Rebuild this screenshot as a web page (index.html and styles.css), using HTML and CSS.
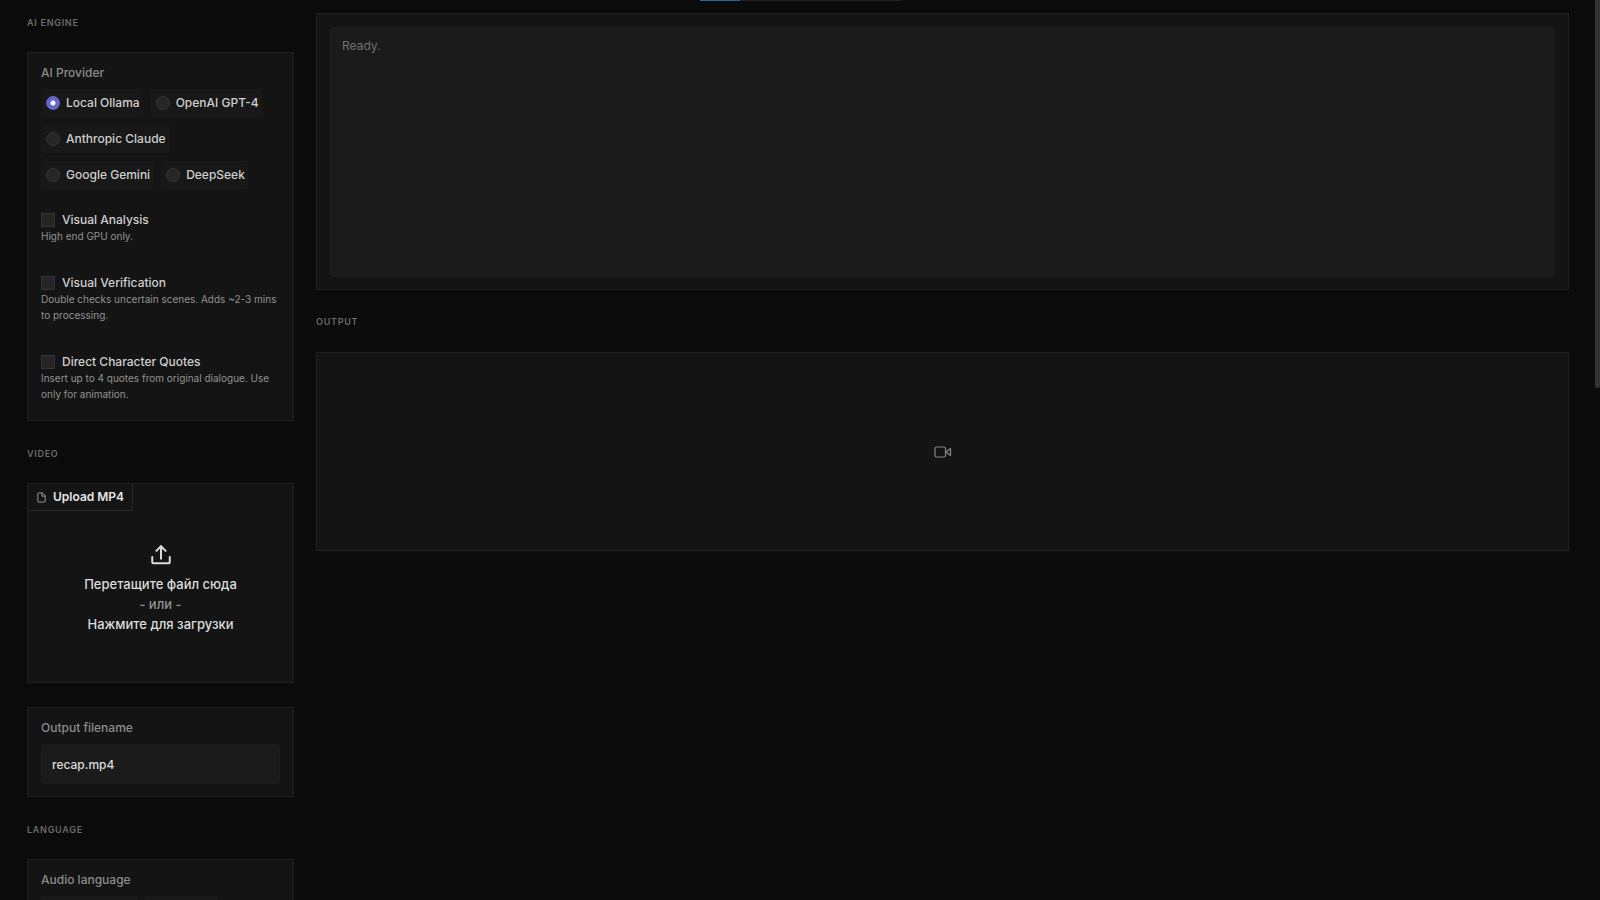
FILE: index.html
```html
<!DOCTYPE html>
<html lang="ru">
<head>
<meta charset="utf-8">
<meta name="viewport" content="width=device-width, initial-scale=1">
<title>Recap</title>
<link rel="stylesheet" href="styles.css">
</head>
<body>
<div class="progress"><div class="progress-fill"></div></div>
<div class="scroll-thumb"></div>
<main class="layout">
  <aside class="sidebar">
    <h2 class="section-title">AI Engine</h2>
    <section class="card engine">
      <fieldset class="field">
        <legend class="label">AI Provider</legend>
        <div class="options">
          <label class="option"><input class="radio" type="radio" name="provider" checked>Local Ollama</label>
          <label class="option"><input class="radio" type="radio" name="provider">OpenAI GPT-4</label>
          <label class="option"><input class="radio" type="radio" name="provider">Anthropic Claude</label>
          <label class="option"><input class="radio" type="radio" name="provider">Google Gemini</label>
          <label class="option"><input class="radio" type="radio" name="provider">DeepSeek</label>
        </div>
      </fieldset>
      <div class="toggles">
        <div class="toggle">
          <label class="check-label"><input class="check" type="checkbox">Visual Analysis</label>
          <p class="hint">High end GPU only.</p>
        </div>
        <div class="toggle">
          <label class="check-label"><input class="check" type="checkbox">Visual Verification</label>
          <p class="hint">Double checks uncertain scenes. Adds ~2-3 mins to processing.</p>
        </div>
        <div class="toggle">
          <label class="check-label"><input class="check" type="checkbox">Direct Character Quotes</label>
          <p class="hint">Insert up to 4 quotes from original dialogue. Use only for animation.</p>
        </div>
      </div>
    </section>

    <h2 class="section-title">Video</h2>
    <section class="card upload">
      <div class="upload-tab">
        <svg class="file-icon" viewBox="0 0 24 24" fill="none" stroke="currentColor" stroke-width="2" stroke-linecap="round" stroke-linejoin="round"><path d="M13 2H6a2 2 0 0 0-2 2v16a2 2 0 0 0 2 2h12a2 2 0 0 0 2-2V9z"/><path d="M13 2v7h7"/></svg>
        <span>Upload MP4</span>
      </div>
      <button class="drop" type="button">
        <svg class="upload-icon" viewBox="0 0 24 24" fill="none" stroke="currentColor" stroke-width="2.4" stroke-linecap="round" stroke-linejoin="round"><path d="M1.500 14.500v5.500a2 2 0 0 0 2 2h17a2 2 0 0 0 2-2v-5.500"/><path d="M6.500 7 12 1.500 17.500 7"/><path d="M12 1.500v15"/></svg>
        <span>Перетащите файл сюда</span>
        <span class="or">- или -</span>
        <span>Нажмите для загрузки</span>
      </button>
    </section>
    <section class="card filename">
      <label class="label" for="filename">Output filename</label>
      <input class="text-input" id="filename" type="text" value="recap.mp4">
    </section>

    <h2 class="section-title">Language</h2>
    <section class="card engine">
      <fieldset class="field">
        <legend class="label">Audio language</legend>
        <div class="options">
          <label class="option option-wide"><input class="radio" type="radio" name="audio" checked></label>
          <label class="option option-short"><input class="radio" type="radio" name="audio"></label>
        </div>
      </fieldset>
    </section>
  </aside>

  <div class="content">
    <section class="card status">
      <textarea class="log" aria-label="Status" readonly>Ready.</textarea>
    </section>
    <h2 class="section-title">Output</h2>
    <section class="card player" aria-label="Output video">
      <svg class="video-icon" viewBox="0 0 18 12" fill="none" stroke="currentColor" stroke-width="1.2" stroke-linejoin="round"><rect x="1" y="1" width="10.500" height="10" rx="1.500"/><path d="M12 6l4.500-3.500v7z"/></svg>
    </section>
  </div>
</main>
</body>
</html>
```
FILE: styles.css
```css
* {
  box-sizing: border-box;
}

body {
  margin: 0;
  height: 100vh;
  overflow: hidden;
  background: #0b0b0b;
  color: #cfcfcf;
  font: 500 12px/16px Inter, "Noto Sans", sans-serif;
}

.progress {
  position: absolute;
  top: 0;
  left: 50%;
  width: 202px;
  height: 1px;
  margin-left: -100px;
  background: #202020;
}

.progress-fill {
  width: 40px;
  height: 100%;
  background: #2d5f91;
}

.scroll-thumb {
  position: absolute;
  top: 0;
  right: 0;
  width: 5px;
  height: 388px;
  border-radius: 0 0 3px 3px;
  background: #333;
}

.layout {
  display: grid;
  grid-template-columns: 267px minmax(0, 1fr);
  gap: 22px;
  padding: 13px 31px 0 27px;
}

.section-title {
  margin: 0;
  color: #6a6a6a;
  font-size: 9px;
  font-weight: 600;
  line-height: 20px;
  letter-spacing: 0.08em;
  text-transform: uppercase;
}

.card {
  border: 1px solid #202020;
  background: #141414;
}

.sidebar .card {
  margin-top: 19px;
}

.sidebar .card + .section-title {
  margin-top: 23px;
}

.engine {
  padding: 12px 13px 18px;
}

.field {
  min-width: 0;
  margin: 0;
  padding: 0;
  border: 0;
}

.label {
  display: block;
  padding: 0;
  color: #8c8c8c;
}

.options {
  display: flex;
  flex-wrap: wrap;
  gap: 8px;
  padding-top: 8px;
}

.option {
  display: flex;
  align-items: center;
  gap: 6px;
  height: 28px;
  padding: 0 3px 0 5px;
  border-radius: 2px;
  background: #181818;
}

.option-wide {
  width: 96px;
}

.option-short {
  width: 72px;
}

.radio,
.check {
  flex: none;
  width: 14px;
  height: 14px;
  margin: 0;
  appearance: none;
  border: 1px solid #353535;
  background: #262626;
}

.radio {
  border-radius: 50%;
}

.radio:checked {
  border-color: #6366c8;
  background: radial-gradient(circle, #fff 2px, #6366c8 3px);
}

.toggles {
  display: grid;
  gap: 31px;
  padding-top: 23px;
}

.check-label {
  display: flex;
  align-items: center;
  gap: 7px;
}

.hint {
  margin: 0;
  color: #929292;
  font-size: 10px;
  font-weight: 400;
}

.upload {
  display: flex;
  flex-direction: column;
  align-items: stretch;
}

.upload-tab {
  display: flex;
  align-items: center;
  align-self: flex-start;
  gap: 6px;
  height: 27px;
  padding: 0 8px;
  border: solid #262626;
  border-width: 0 1px 1px 0;
  color: #e6e6e6;
  font-weight: 600;
}

.file-icon {
  width: 11px;
  height: 11px;
  color: #a0a0a0;
}

.drop {
  display: flex;
  flex-direction: column;
  align-items: center;
  padding: 34px 0 48px;
  border: 0;
  background: none;
  color: #dcdcdc;
  font: inherit;
  font-size: 13px;
  line-height: 20px;
}

.upload-icon {
  width: 20px;
  height: 20px;
  margin-bottom: 9px;
}

.or {
  color: #929292;
}

.sidebar .filename {
  margin-top: 24px;
  padding: 12px 13px;
}

.text-input {
  width: 100%;
  height: 40px;
  margin-top: 8px;
  padding: 0 10px;
  border: 1px solid #1d1d1d;
  border-radius: 4px;
  background: #1b1b1b;
  color: #dcdcdc;
  font: inherit;
}

.status {
  display: flex;
  margin-bottom: 22px;
  padding: 13px 13px 12px;
}

.log {
  flex: 1;
  height: 250px;
  padding: 11px 12px;
  border: 0;
  border-radius: 3px;
  background: #1b1b1b;
  color: #707070;
  font: inherit;
  font-weight: 400;
  resize: none;
}

.player {
  display: flex;
  align-items: center;
  justify-content: center;
  height: 199px;
  margin-top: 20px;
}

.video-icon {
  width: 18px;
  height: 12px;
  color: #858585;
}
```
